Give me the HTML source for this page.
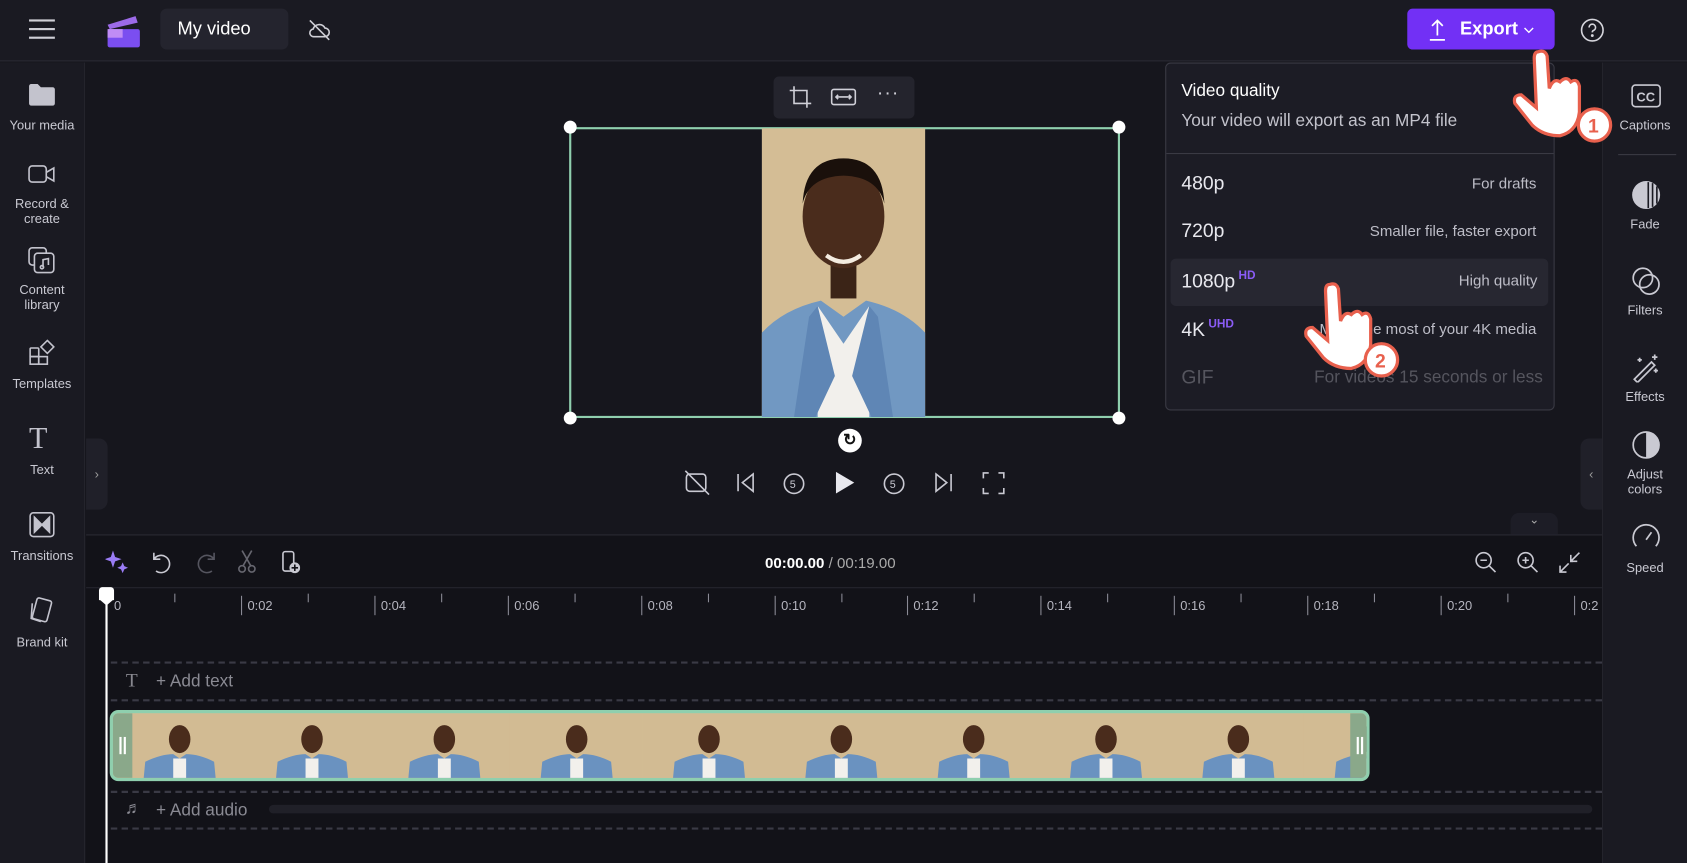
<!DOCTYPE html>
<html><head><meta charset="utf-8"><style>
*{box-sizing:border-box;margin:0;padding:0}
body{width:1687px;height:863px;overflow:hidden;background:#16161d;font-family:"Liberation Sans",sans-serif;color:#e8e8ee}
#s{width:1568px;height:801px;transform:scale(1.07589,1.07740);transform-origin:0 0;position:relative;background:#16161d}
.a{position:absolute}
.lab{font-size:12px;color:#c9c9d2;text-align:center;width:78px;line-height:14px}
.ri{font-size:12px;color:#c9c9d2;text-align:center;width:78px}
.tk{position:absolute;top:553px;width:1px;height:18px;background:#8a8a95}
.tks{position:absolute;top:551px;width:1px;height:8px;background:#8a8a95}
.tl{position:absolute;top:555px;font-size:12px;color:#b5b5bf}
.dash{position:absolute;left:103px;width:1386px;height:0;border-top:2px dashed #3a3a45}
.row{position:absolute;left:1088px;width:350px;height:44px;font-size:18px}
.row .r{position:absolute;right:10px;top:12px;font-size:14px;color:#bdbdc7}
.row .l{position:absolute;left:10px;top:10px}
</style></head><body><div id="s">
<!-- top bar -->
<div class="a" style="left:0;top:0;width:1568px;height:57px;background:#1a1a22;border-bottom:1px solid #2a2a33"></div>
<div class="a" style="left:27px;top:18px;width:24px;height:2px;background:#cfcfd6;box-shadow:0 8px 0 #cfcfd6,0 16px 0 #cfcfd6"></div>
<svg class="a" style="left:98px;top:13px" width="34" height="32"><path d="M2 10 L28 2 L30 8 L4 14Z" fill="#9c6ae8"/><rect x="2" y="14" width="30" height="17" rx="2" fill="#7b4ef0"/><rect x="2" y="14" width="14" height="8" fill="#c08cf5"/></svg>
<div class="a" style="left:149px;top:8px;width:119px;height:38px;background:#24242e;border-radius:6px;font-size:17px;line-height:38px;padding-left:16px;color:#fff">My video</div>
<svg class="a" style="left:285px;top:16px" width="24" height="24" fill="none" stroke="#cfcfd6" stroke-width="1.5"><path d="M7 18h10a4 4 0 0 0 0-8 6 6 0 0 0-11 1 3.5 3.5 0 0 0 1 7z"/><path d="M3 3l18 18"/></svg>
<div class="a" style="left:1308px;top:8px;width:137px;height:38px;background:#7230f5;border-radius:5px"></div>
<svg class="a" style="left:1326px;top:17px" width="20" height="22" fill="none" stroke="#fff" stroke-width="1.6"><path d="M10 16V2M5 7l5-5 5 5M3 20h14"/></svg>
<div class="a" style="left:1357px;top:17px;font-size:17px;font-weight:bold;color:#fff">Export</div>
<svg class="a" style="left:1415px;top:24px" width="12" height="8" fill="none" stroke="#fff" stroke-width="1.3"><path d="M2 2l4 4 4-4"/></svg>
<svg class="a" style="left:1468px;top:16px" width="24" height="24" fill="none" stroke="#d5d5dc" stroke-width="1.5"><circle cx="12" cy="12" r="10"/><path d="M9 9.5a3 3 0 1 1 4 2.8c-.8.3-1 .8-1 1.7"/><circle cx="12" cy="17" r=".6" fill="#d5d5dc"/></svg>
<!-- left sidebar -->
<div class="a" style="left:0;top:58px;width:79px;height:743px;background:#1a1a22;border-right:1px solid #24242c"></div>
<svg class="a" style="left:26px;top:76px" width="26" height="24"><path d="M1 4a2 2 0 0 1 2-2h6l3 3h11a2 2 0 0 1 2 2v13a2 2 0 0 1-2 2H3a2 2 0 0 1-2-2z" fill="#c3c3cd"/></svg>
<div class="a lab" style="left:0;top:109px">Your media</div>
<svg class="a" style="left:26px;top:151px" width="26" height="22" fill="none" stroke="#c3c3cd" stroke-width="1.5"><rect x="1" y="3" width="16" height="15" rx="3"/><path d="M17 9l7-4v12l-7-4"/></svg>
<div class="a lab" style="left:0;top:182px">Record &amp;<br>create</div>
<svg class="a" style="left:26px;top:229px" width="26" height="26" fill="none" stroke="#c3c3cd" stroke-width="1.5"><rect x="1" y="1" width="16" height="16" rx="3"/><rect x="6" y="6" width="18" height="18" rx="3" fill="#1a1a22"/><path d="M14 19v-7l5-1v6"/><circle cx="13" cy="19" r="1.5"/></svg>
<div class="a lab" style="left:0;top:262px">Content<br>library</div>
<svg class="a" style="left:27px;top:315px" width="24" height="24" fill="none" stroke="#c3c3cd" stroke-width="1.5"><rect x="1" y="8" width="8" height="8" rx="1"/><rect x="1" y="16" width="8" height="7"/><rect x="9" y="16" width="8" height="7"/><path d="M17 1l6 6-6 6-6-6z"/></svg>
<div class="a lab" style="left:0;top:349px">Templates</div>
<div class="a" style="left:27px;top:392px;font-size:28px;color:#c3c3cd;font-family:'Liberation Serif',serif">T</div>
<div class="a lab" style="left:0;top:429px">Text</div>
<svg class="a" style="left:27px;top:475px" width="24" height="24" fill="none" stroke="#c3c3cd" stroke-width="1.5"><rect x="1" y="1" width="22" height="22" rx="3"/><path d="M5 5l7 7-7 7z" fill="#c3c3cd"/><path d="M19 5l-7 7 7 7z" fill="#c3c3cd"/></svg>
<div class="a lab" style="left:0;top:509px">Transitions</div>
<svg class="a" style="left:27px;top:554px" width="24" height="26" fill="none" stroke="#c3c3cd" stroke-width="1.5"><rect x="5" y="2" width="14" height="20" rx="2" transform="rotate(15 12 12)"/><path d="M3 6l-1 14 9 3"/></svg>
<div class="a lab" style="left:0;top:589px">Brand kit</div>
<div class="a" style="left:80px;top:407px;width:20px;height:66px;background:#202029;border-radius:0 8px 8px 0;color:#999;font-size:12px;line-height:66px;text-align:center">›</div>
<!-- right sidebar -->
<div class="a" style="left:1489px;top:58px;width:79px;height:743px;background:#1a1a22;border-left:1px solid #24242c"></div>
<div class="a" style="left:1469px;top:407px;width:20px;height:66px;background:#202029;border-radius:8px 0 0 8px;color:#999;font-size:12px;line-height:66px;text-align:center">‹</div>
<svg class="a" style="left:1516px;top:78px" width="28" height="22" fill="none" stroke="#c9c9d2" stroke-width="1.5"><rect x="1" y="1" width="26" height="20" rx="3"/><text x="5" y="16" font-size="12" fill="#c9c9d2" stroke="none" font-family="Liberation Sans" font-weight="bold">CC</text></svg>
<div class="a ri" style="left:1490px;top:109px">Captions</div>
<div class="a" style="left:1504px;top:143px;width:54px;height:1px;background:#3a3a44"></div>
<svg class="a" style="left:1516px;top:167px" width="28" height="28"><circle cx="14" cy="14" r="13" fill="#c9c9d2"/><path d="M16 2v24M20 3v22M24 6v16" stroke="#1a1a22" stroke-width="1.5"/></svg>
<div class="a ri" style="left:1490px;top:201px">Fade</div>
<svg class="a" style="left:1516px;top:247px" width="28" height="28" fill="none" stroke="#c9c9d2" stroke-width="1.6"><circle cx="11" cy="11" r="9"/><circle cx="17" cy="17" r="9"/></svg>
<div class="a ri" style="left:1490px;top:281px">Filters</div>
<svg class="a" style="left:1516px;top:327px" width="28" height="28" fill="none" stroke="#c9c9d2" stroke-width="1.6"><path d="M3 25l16-16 3 3-16 16z"/><path d="M22 2v5M19.5 4.5h5M8 5v4M6 7h4M23 15v4M21 17h4"/></svg>
<div class="a ri" style="left:1490px;top:361px">Effects</div>
<svg class="a" style="left:1516px;top:399px" width="28" height="28"><circle cx="14" cy="14" r="12" fill="none" stroke="#c9c9d2" stroke-width="1.6"/><path d="M14 2a12 12 0 0 1 0 24z" fill="#c9c9d2"/></svg>
<div class="a ri" style="left:1490px;top:433px;line-height:14px">Adjust<br>colors</div>
<svg class="a" style="left:1516px;top:485px" width="28" height="28" fill="none" stroke="#c9c9d2" stroke-width="1.6"><path d="M5 22a12 12 0 1 1 18 0"/><path d="M14 16l5-7"/></svg>
<div class="a ri" style="left:1490px;top:520px">Speed</div>
<!-- preview toolbar -->
<div class="a" style="left:719px;top:71px;width:131px;height:39px;background:#24242d;border-radius:5px"></div>
<svg class="a" style="left:733px;top:79px" width="22" height="22" fill="none" stroke="#d0d0d8" stroke-width="1.5"><path d="M5 1v16h16M1 5h16v16"/></svg>
<svg class="a" style="left:772px;top:80px" width="24" height="20" fill="none" stroke="#d0d0d8" stroke-width="1.5"><rect x="1" y="3" width="22" height="14" rx="2"/><path d="M5 10h14M7 8l-2 2 2 2M17 8l2 2-2 2"/></svg>
<div class="a" style="left:815px;top:76px;font-size:18px;color:#d0d0d8;letter-spacing:1px">···</div>
<!-- canvas -->
<div class="a" style="left:529px;top:118px;width:512px;height:270px;border:2px solid #8fcfae"></div>
<svg class="a" style="left:708px;top:119px" width="152" height="268" viewBox="0 0 152 268">
<rect width="152" height="268" fill="#d4bd95"/>
<path d="M0 268 L0 190 Q20 168 55 160 L76 175 L97 160 Q132 168 152 190 L152 268Z" fill="#7198c2"/>
<path d="M52 165 L76 200 L100 165 L100 268 L52 268Z" fill="#f2f0ec"/>
<path d="M44 175 L52 165 L68 230 L50 268 L30 268Z M108 175 L100 165 L84 230 L102 268 L122 268Z" fill="#5f86b5"/>
<rect x="64" y="118" width="24" height="40" fill="#3b2417"/>
<ellipse cx="76" cy="82" rx="38" ry="48" fill="#4a2c1c"/>
<path d="M38 70 Q40 28 76 28 Q112 28 114 70 Q108 45 76 44 Q44 45 38 70Z" fill="#1a100b"/>
<path d="M60 118 Q76 130 92 118" stroke="#f4ece0" stroke-width="4" fill="none"/>
</svg>
<div class="a" style="left:524px;top:112px;width:12px;height:12px;border-radius:50%;background:#fff"></div>
<div class="a" style="left:1034px;top:112px;width:12px;height:12px;border-radius:50%;background:#fff"></div>
<div class="a" style="left:524px;top:382px;width:12px;height:12px;border-radius:50%;background:#fff"></div>
<div class="a" style="left:1034px;top:382px;width:12px;height:12px;border-radius:50%;background:#fff"></div>
<div class="a" style="left:779px;top:398px;width:22px;height:22px;border-radius:50%;background:#fff;color:#111;font-size:15px;line-height:22px;text-align:center;font-weight:bold">↻</div>
<!-- playback -->
<svg class="a" style="left:636px;top:436px" width="300" height="24" fill="none" stroke="#c9c9d2" stroke-width="1.5">
<rect x="2" y="4" width="18" height="16" rx="3"/><path d="M1 1l22 22"/>
<path d="M50 4v16M64 4l-10 8 10 8z"/>
<circle cx="102" cy="13" r="9"/><text x="98" y="17" font-size="10" fill="#c9c9d2" stroke="none">5</text>
<path d="M141 2l17 10-17 10z" fill="#e8e8ee" stroke="none"/>
<circle cx="195" cy="13" r="9"/><text x="191" y="17" font-size="10" fill="#c9c9d2" stroke="none">5</text>
<path d="M234 4l10 8-10 8zM248 4v16"/>
<path d="M278 8V3h5M292 3h5v5M297 17v5h-5M283 22h-5v-5"/>
</svg>
<div class="a" style="left:1404px;top:476px;width:44px;height:20px;background:#1d1d26;border-radius:8px 8px 0 0;color:#aaa;font-size:11px;text-align:center">⌄</div>
<!-- timeline -->
<div class="a" style="left:80px;top:496px;width:1409px;height:305px;background:#121218;border-top:1px solid #2a2a33"></div>
<svg class="a" style="left:98px;top:510px" width="22" height="22"><path d="M7 1l2 6 6 2-6 2-2 6-2-6-6-2 6-2zM16 12l1.5 3.5 3.5 1.5-3.5 1.5L16 22l-1.5-3.5-3.5-1.5 3.5-1.5z" fill="#9a7cf5"/></svg>
<svg class="a" style="left:139px;top:510px" width="140" height="24" fill="none" stroke-width="1.5"><path d="M4 3v6h6M4 9a8 8 0 1 1 2 11" stroke="#c9c9d2"/><path d="M60 3v6h-6M60 9a8 8 0 1 0-2 11" stroke="#55555f"/><g stroke="#66666f"><circle cx="86" cy="18" r="3"/><circle cx="95" cy="18" r="3"/><path d="M87 15l8-14M94 15l-8-14"/></g><g stroke="#c9c9d2"><rect x="124" y="2" width="10" height="18" rx="2"/></g><circle cx="135" cy="17" r="5" fill="#c9c9d2"/><path d="M132 17h6M135 14v6" stroke="#121218"/></svg>
<div class="a" style="left:711px;top:514px;font-size:14px;color:#fff;font-weight:bold">00:00.00 <span style="color:#aaa;font-weight:normal">/ 00:19.00</span></div>
<svg class="a" style="left:1370px;top:511px" width="104" height="22" fill="none" stroke="#c9c9d2" stroke-width="1.5"><circle cx="9" cy="9" r="7"/><path d="M14 14l6 6M6 9h6"/><circle cx="48" cy="9" r="7"/><path d="M53 14l6 6M45 9h6M48 6v6"/><path d="M80 20l8-8M80 14v6h6M98 2l-8 8M92 10h-2v-2M98 2"/><path d="M90 4v6h6"/></svg>
<div class="a" style="left:80px;top:545px;width:1409px;height:1px;background:#26262e"></div>
<div class="tl" style="left:106px">0</div>
<div class="tks" style="left:162px"></div>
<div class="tk" style="left:224px"></div><div class="tl" style="left:230px">0:02</div><div class="tks" style="left:286px"></div>
<div class="tk" style="left:348px"></div><div class="tl" style="left:354px">0:04</div><div class="tks" style="left:410px"></div>
<div class="tk" style="left:472px"></div><div class="tl" style="left:478px">0:06</div><div class="tks" style="left:534px"></div>
<div class="tk" style="left:596px"></div><div class="tl" style="left:602px">0:08</div><div class="tks" style="left:658px"></div>
<div class="tk" style="left:720px"></div><div class="tl" style="left:726px">0:10</div><div class="tks" style="left:782px"></div>
<div class="tk" style="left:843px"></div><div class="tl" style="left:849px">0:12</div><div class="tks" style="left:905px"></div>
<div class="tk" style="left:967px"></div><div class="tl" style="left:973px">0:14</div><div class="tks" style="left:1029px"></div>
<div class="tk" style="left:1091px"></div><div class="tl" style="left:1097px">0:16</div><div class="tks" style="left:1153px"></div>
<div class="tk" style="left:1215px"></div><div class="tl" style="left:1221px">0:18</div><div class="tks" style="left:1277px"></div>
<div class="tk" style="left:1339px"></div><div class="tl" style="left:1345px">0:20</div><div class="tks" style="left:1401px"></div>
<div class="tk" style="left:1463px"></div><div class="tl" style="left:1469px">0:2</div>
<div class="dash" style="top:614px"></div>
<div class="dash" style="top:649px"></div>
<div class="dash" style="top:734px"></div>
<div class="dash" style="top:768px"></div>
<div class="a" style="left:117px;top:621px;font-size:18px;color:#88888f;font-family:'Liberation Serif',serif">T</div>
<div class="a" style="left:145px;top:624px;font-size:16px;color:#8a8a93">+ Add text</div>
<div class="a" style="left:116px;top:742px;font-size:16px;color:#8a8a93">♬</div>
<div class="a" style="left:145px;top:744px;font-size:16px;color:#8a8a93">+ Add audio</div>
<div class="a" style="left:250px;top:747px;width:1230px;height:8px;background:#2a2a33;border-radius:4px;opacity:.6"></div>
<!-- clip -->
<div class="a" style="left:102px;top:659px;width:1171px;height:66px;border:3px solid #8fcfae;border-radius:8px;background:#d4bd95;overflow:hidden">
<svg width="1171" height="66" style="position:absolute;left:0;top:0">
<defs><g id="p"><rect width="123" height="66" fill="#d2bb93"/><path d="M28 66 L30 45 Q45 38 56 38 L62 42 L68 38 Q80 38 94 45 L96 66Z" fill="#6a92c0"/><rect x="56" y="42" width="12" height="24" fill="#f2f0ec"/><ellipse cx="62" cy="24" rx="10" ry="13" fill="#4a2c1c"/></g></defs>
<use href="#p" x="0"/><use href="#p" x="123"/><use href="#p" x="246"/><use href="#p" x="369"/><use href="#p" x="492"/><use href="#p" x="615"/><use href="#p" x="738"/><use href="#p" x="861"/><use href="#p" x="984"/><use href="#p" x="1107"/>
</svg>
<div class="a" style="left:0;top:0;width:18px;height:60px;background:#8aa88a"></div>
<div class="a" style="left:1150px;top:0;width:18px;height:60px;background:#8aa88a"></div>
<div class="a" style="left:6px;top:22px;width:2px;height:16px;background:#fff;box-shadow:4px 0 0 #fff"></div>
<div class="a" style="left:1156px;top:22px;width:2px;height:16px;background:#fff;box-shadow:4px 0 0 #fff"></div>
</div>
<!-- playhead -->
<div class="a" style="left:98px;top:553px;width:2px;height:248px;background:#fff"></div>
<div class="a" style="left:92px;top:545px;width:14px;height:12px;background:#fff;border-radius:3px 3px 0 0"></div>
<div class="a" style="left:92px;top:556px;width:0;height:0;border-left:7px solid transparent;border-right:7px solid transparent;border-top:6px solid #fff"></div>
<!-- dropdown -->
<div class="a" style="left:1083px;top:58px;width:362px;height:323px;background:#1c1c25;border:1px solid #3a3a44;border-radius:5px"></div>
<div class="a" style="left:1098px;top:76px;font-size:16px;color:#fff">Video quality</div>
<div class="a" style="left:1098px;top:104px;font-size:16px;color:#c3c3cc">Your video will export as an MP4 file</div>
<div class="a" style="left:1084px;top:142px;width:360px;height:1px;background:#3a3a44"></div>
<div class="row" style="top:150px"><span class="l">480p</span><span class="r">For drafts</span></div>
<div class="row" style="top:194px"><span class="l">720p</span><span class="r">Smaller file, faster export</span></div>
<div class="row" style="top:240px;background:#272731;border-radius:5px;width:351px"><span class="l">1080p<sup style="color:#8b5cf6;font-size:11px;font-weight:bold;vertical-align:8px"> HD</sup></span><span class="r">High quality</span></div>
<div class="row" style="top:285px"><span class="l">4K<sup style="color:#8b5cf6;font-size:11px;font-weight:bold;vertical-align:8px"> UHD</sup></span><span class="r">Make the most of your 4K media</span></div>
<div class="row" style="top:330px;color:#55555e"><span class="l">GIF</span><span class="r" style="color:#55555e;font-size:16px;right:4px">For videos 15 seconds or less</span></div>
<!-- hand cursors -->
<svg class="a" style="left:1402px;top:42px" width="100" height="100">
<path d="M28 6 Q34 4 36 10 L38 40 Q42 30 48 34 Q54 28 58 34 Q64 30 66 38 L66 62 Q64 80 48 84 Q32 84 22 74 L6 54 Q4 46 12 46 L26 58 L24 12 Q24 6 28 6Z" fill="#fff" stroke="#e8604d" stroke-width="3"/>
<circle cx="80" cy="74" r="15" fill="#fff" stroke="#e8604d" stroke-width="3"/><text x="74" y="81" font-size="18" font-weight="bold" fill="#e8604d" font-family="Liberation Sans">1</text></svg>
<svg class="a" style="left:1208px;top:258px" width="100" height="100">
<path d="M28 6 Q34 4 36 10 L38 40 Q42 30 48 34 Q54 28 58 34 Q64 30 66 38 L66 62 Q64 80 48 84 Q32 84 22 74 L6 54 Q4 46 12 46 L26 58 L24 12 Q24 6 28 6Z" fill="#fff" stroke="#e8604d" stroke-width="3"/>
<circle cx="76" cy="76" r="15" fill="#fff" stroke="#e8604d" stroke-width="3"/><text x="70" y="83" font-size="18" font-weight="bold" fill="#e8604d" font-family="Liberation Sans">2</text></svg>
</div></body></html>
